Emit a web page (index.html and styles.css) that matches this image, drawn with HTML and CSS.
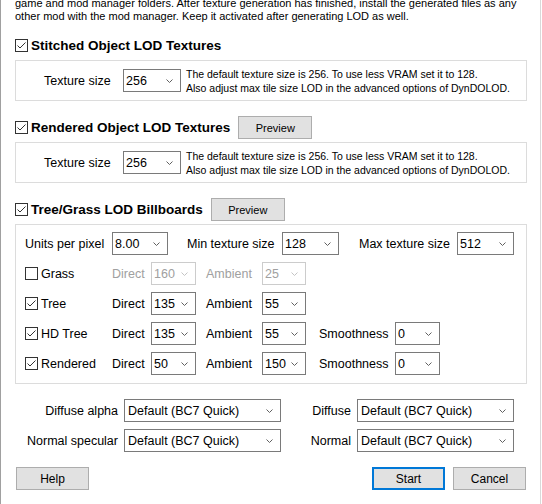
FILE: index.html
```html
<!DOCTYPE html>
<html lang="en">
<head>
<meta charset="utf-8">
<title>DynDOLOD Texture LOD</title>
<link rel="stylesheet" href="styles.css">
</head>
<body>
<div class="window">
  <p class="intro">game and mod manager folders. After texture generation has finished, install the generated files as any<br>other mod with the mod manager. Keep it activated after generating LOD as well.</p>

  <section class="section">
    <div class="head">
      <svg class="cb" viewBox="0 0 13 13"><rect x="0.5" y="0.5" width="12" height="12" fill="#fff" stroke="#333"/><path d="M2.5 6.5 L5 9 L10.5 3.5" fill="none" stroke="#333"/></svg>
      <span class="title">Stitched Object LOD Textures</span>
    </div>
    <div class="panel tex-panel">
      <span class="lbl tex-label">Texture size</span>
      <div class="select w58"><span>256</span><svg class="chev" viewBox="0 0 7 4"><path d="M0.5 0.5 L3.5 3.5 L6.5 0.5" fill="none" stroke="#606060"/></svg></div>
      <p class="desc">The default texture size is 256. To use less VRAM set it to 128.<br>Also adjust max tile size LOD in the advanced options of DynDOLOD.</p>
    </div>
  </section>

  <section class="section">
    <div class="head">
      <svg class="cb" viewBox="0 0 13 13"><rect x="0.5" y="0.5" width="12" height="12" fill="#fff" stroke="#333"/><path d="M2.5 6.5 L5 9 L10.5 3.5" fill="none" stroke="#333"/></svg>
      <span class="title">Rendered Object LOD Textures</span>
      <div class="btn btn-preview">Preview</div>
    </div>
    <div class="panel tex-panel">
      <span class="lbl tex-label">Texture size</span>
      <div class="select w58"><span>256</span><svg class="chev" viewBox="0 0 7 4"><path d="M0.5 0.5 L3.5 3.5 L6.5 0.5" fill="none" stroke="#606060"/></svg></div>
      <p class="desc">The default texture size is 256. To use less VRAM set it to 128.<br>Also adjust max tile size LOD in the advanced options of DynDOLOD.</p>
    </div>
  </section>

  <section class="section">
    <div class="head">
      <svg class="cb" viewBox="0 0 13 13"><rect x="0.5" y="0.5" width="12" height="12" fill="#fff" stroke="#333"/><path d="M2.5 6.5 L5 9 L10.5 3.5" fill="none" stroke="#333"/></svg>
      <span class="title">Tree/Grass LOD Billboards</span>
      <div class="btn btn-preview">Preview</div>
    </div>
    <div class="panel bb-panel">
      <div class="bb-row">
        <span class="lbl c-units">Units per pixel</span>
        <div class="select w56"><span>8.00</span><svg class="chev" viewBox="0 0 7 4"><path d="M0.5 0.5 L3.5 3.5 L6.5 0.5" fill="none" stroke="#606060"/></svg></div>
        <span class="lbl c-min">Min texture size</span>
        <div class="select w57"><span>128</span><svg class="chev" viewBox="0 0 7 4"><path d="M0.5 0.5 L3.5 3.5 L6.5 0.5" fill="none" stroke="#606060"/></svg></div>
        <span class="lbl c-max">Max texture size</span>
        <div class="select w57"><span>512</span><svg class="chev" viewBox="0 0 7 4"><path d="M0.5 0.5 L3.5 3.5 L6.5 0.5" fill="none" stroke="#606060"/></svg></div>
      </div>

      <div class="bb-row disabled">
        <label class="c-check"><svg class="cb" viewBox="0 0 13 13"><rect x="0.5" y="0.5" width="12" height="12" fill="#fff" stroke="#333"/></svg><span class="lbl check-text">Grass</span></label>
        <span class="lbl c-direct">Direct</span>
        <div class="select w45"><span>160</span><svg class="chev" viewBox="0 0 7 4"><path d="M0.5 0.5 L3.5 3.5 L6.5 0.5" fill="none" stroke="#c4c4c4"/></svg></div>
        <span class="lbl c-ambient">Ambient</span>
        <div class="select w44"><span>25</span><svg class="chev" viewBox="0 0 7 4"><path d="M0.5 0.5 L3.5 3.5 L6.5 0.5" fill="none" stroke="#c4c4c4"/></svg></div>
      </div>

      <div class="bb-row">
        <label class="c-check"><svg class="cb" viewBox="0 0 13 13"><rect x="0.5" y="0.5" width="12" height="12" fill="#fff" stroke="#333"/><path d="M2.5 6.5 L5 9 L10.5 3.5" fill="none" stroke="#333"/></svg><span class="lbl check-text">Tree</span></label>
        <span class="lbl c-direct">Direct</span>
        <div class="select w45"><span>135</span><svg class="chev" viewBox="0 0 7 4"><path d="M0.5 0.5 L3.5 3.5 L6.5 0.5" fill="none" stroke="#606060"/></svg></div>
        <span class="lbl c-ambient">Ambient</span>
        <div class="select w44"><span>55</span><svg class="chev" viewBox="0 0 7 4"><path d="M0.5 0.5 L3.5 3.5 L6.5 0.5" fill="none" stroke="#606060"/></svg></div>
      </div>

      <div class="bb-row">
        <label class="c-check"><svg class="cb" viewBox="0 0 13 13"><rect x="0.5" y="0.5" width="12" height="12" fill="#fff" stroke="#333"/><path d="M2.5 6.5 L5 9 L10.5 3.5" fill="none" stroke="#333"/></svg><span class="lbl check-text">HD Tree</span></label>
        <span class="lbl c-direct">Direct</span>
        <div class="select w45"><span>135</span><svg class="chev" viewBox="0 0 7 4"><path d="M0.5 0.5 L3.5 3.5 L6.5 0.5" fill="none" stroke="#606060"/></svg></div>
        <span class="lbl c-ambient">Ambient</span>
        <div class="select w44"><span>55</span><svg class="chev" viewBox="0 0 7 4"><path d="M0.5 0.5 L3.5 3.5 L6.5 0.5" fill="none" stroke="#606060"/></svg></div>
        <span class="lbl c-smooth">Smoothness</span>
        <div class="select w45"><span>0</span><svg class="chev" viewBox="0 0 7 4"><path d="M0.5 0.5 L3.5 3.5 L6.5 0.5" fill="none" stroke="#606060"/></svg></div>
      </div>

      <div class="bb-row">
        <label class="c-check"><svg class="cb" viewBox="0 0 13 13"><rect x="0.5" y="0.5" width="12" height="12" fill="#fff" stroke="#333"/><path d="M2.5 6.5 L5 9 L10.5 3.5" fill="none" stroke="#333"/></svg><span class="lbl check-text">Rendered</span></label>
        <span class="lbl c-direct">Direct</span>
        <div class="select w45"><span>50</span><svg class="chev" viewBox="0 0 7 4"><path d="M0.5 0.5 L3.5 3.5 L6.5 0.5" fill="none" stroke="#606060"/></svg></div>
        <span class="lbl c-ambient">Ambient</span>
        <div class="select w44"><span>150</span><svg class="chev" viewBox="0 0 7 4"><path d="M0.5 0.5 L3.5 3.5 L6.5 0.5" fill="none" stroke="#606060"/></svg></div>
        <span class="lbl c-smooth">Smoothness</span>
        <div class="select w45"><span>0</span><svg class="chev" viewBox="0 0 7 4"><path d="M0.5 0.5 L3.5 3.5 L6.5 0.5" fill="none" stroke="#606060"/></svg></div>
      </div>
    </div>
  </section>

  <div class="formats">
    <span class="lbl fmt-label">Diffuse alpha</span>
    <div class="select"><span>Default (BC7 Quick)</span><svg class="chev" viewBox="0 0 7 4"><path d="M0.5 0.5 L3.5 3.5 L6.5 0.5" fill="none" stroke="#606060"/></svg></div>
    <span class="lbl fmt-label">Diffuse</span>
    <div class="select"><span>Default (BC7 Quick)</span><svg class="chev" viewBox="0 0 7 4"><path d="M0.5 0.5 L3.5 3.5 L6.5 0.5" fill="none" stroke="#606060"/></svg></div>
    <span class="lbl fmt-label">Normal specular</span>
    <div class="select"><span>Default (BC7 Quick)</span><svg class="chev" viewBox="0 0 7 4"><path d="M0.5 0.5 L3.5 3.5 L6.5 0.5" fill="none" stroke="#606060"/></svg></div>
    <span class="lbl fmt-label">Normal</span>
    <div class="select"><span>Default (BC7 Quick)</span><svg class="chev" viewBox="0 0 7 4"><path d="M0.5 0.5 L3.5 3.5 L6.5 0.5" fill="none" stroke="#606060"/></svg></div>
  </div>

  <div class="actions">
    <div class="btn btn-help">Help</div>
    <div class="btn btn-default">Start</div>
    <div class="btn btn-cancel">Cancel</div>
  </div>
</div>
</body>
</html>
```

FILE: styles.css
```css
html, body {
  margin: 0;
  background: #ffffff;
}

body {
  font-family: "Liberation Sans", Arial, sans-serif;
  color: #000000;
}

.window {
  box-sizing: border-box;
  width: 541px;
  height: 504px;
  border-left: 1px solid #a0a0a0;
  border-right: 1px solid #d9d9d9;
  padding: 0 13px 0 14px;
  overflow: hidden;
}

.intro {
  margin: -3px 0 0;
  font-size: 11px;
  line-height: 13px;
  white-space: nowrap;
}

.section {
  margin-top: 15px;
}

.intro + .section {
  margin-top: 11px;
}

.head {
  display: flex;
  align-items: center;
  height: 23px;
}

.cb {
  display: block;
  flex: none;
  width: 13px;
  height: 13px;
}

.title {
  margin-left: 3px;
  font-size: 13.5px;
  font-weight: bold;
  white-space: nowrap;
}

.btn {
  box-sizing: border-box;
  flex: none;
  display: flex;
  align-items: center;
  justify-content: center;
  width: 73px;
  height: 23px;
  background: #e1e1e1;
  border: 1px solid #adadad;
  font-size: 12px;
}

.btn-preview {
  width: 74px;
  margin-left: 8px;
  font-size: 11px;
}

.panel {
  box-sizing: border-box;
  margin-top: 3px;
  border: 1px solid #dcdcdc;
}

.tex-panel {
  display: flex;
  align-items: center;
  height: 41px;
  padding-left: 28px;
}

.lbl {
  font-size: 12.5px;
  white-space: nowrap;
}

.tex-label {
  width: 79px;
  flex: none;
}

.select {
  box-sizing: border-box;
  flex: none;
  display: flex;
  align-items: center;
  justify-content: space-between;
  height: 23px;
  padding: 0 7px 0 2px;
  border: 1px solid #7a7a7a;
  background: #ffffff;
  font-size: 12.5px;
  white-space: nowrap;
}

.chev {
  display: block;
  width: 7px;
  height: 4px;
  flex: none;
}

.w44 { width: 44px; }
.w45 { width: 45px; }
.w56 { width: 56px; }
.w57 { width: 57px; }
.w58 { width: 58px; }

.desc {
  margin: 0 0 0 5px;
  font-size: 10.5px;
  line-height: 14px;
  white-space: nowrap;
}

.bb-panel {
  display: flex;
  flex-direction: column;
  gap: 7px;
  padding: 7px 0 8px 9px;
}

.bb-row {
  display: flex;
  align-items: center;
  height: 23px;
}

.c-units {
  width: 87px;
  flex: none;
}

.c-min {
  width: 95px;
  margin-left: 19px;
  flex: none;
}

.c-max {
  width: 98px;
  margin-left: 20px;
  flex: none;
}

.c-check {
  display: flex;
  align-items: center;
  width: 87px;
  flex: none;
}

.check-text {
  margin-left: 3px;
}

.c-direct {
  width: 39px;
  flex: none;
}

.c-ambient {
  box-sizing: border-box;
  width: 66px;
  padding-left: 10px;
  flex: none;
}

.c-smooth {
  box-sizing: border-box;
  width: 89px;
  padding-left: 13px;
  flex: none;
}

.disabled .c-direct,
.disabled .c-ambient,
.disabled .select {
  color: #a0a0a0;
}

.disabled .select {
  border-color: #cccccc;
}

.formats {
  display: grid;
  grid-template-columns: 103px 157px 64px 157px;
  column-gap: 6px;
  row-gap: 7px;
  margin-top: 15px;
  align-items: center;
}

.fmt-label {
  text-align: right;
}

.formats .select {
  padding-left: 3px;
}

.actions {
  display: flex;
  align-items: center;
  margin-top: 15px;
}

.btn-help {
  margin-left: 1px;
}

.btn-default {
  margin-left: auto;
  border: 2px solid #0078d7;
}

.btn-cancel {
  margin-left: 8px;
  margin-right: 1px;
}
```
